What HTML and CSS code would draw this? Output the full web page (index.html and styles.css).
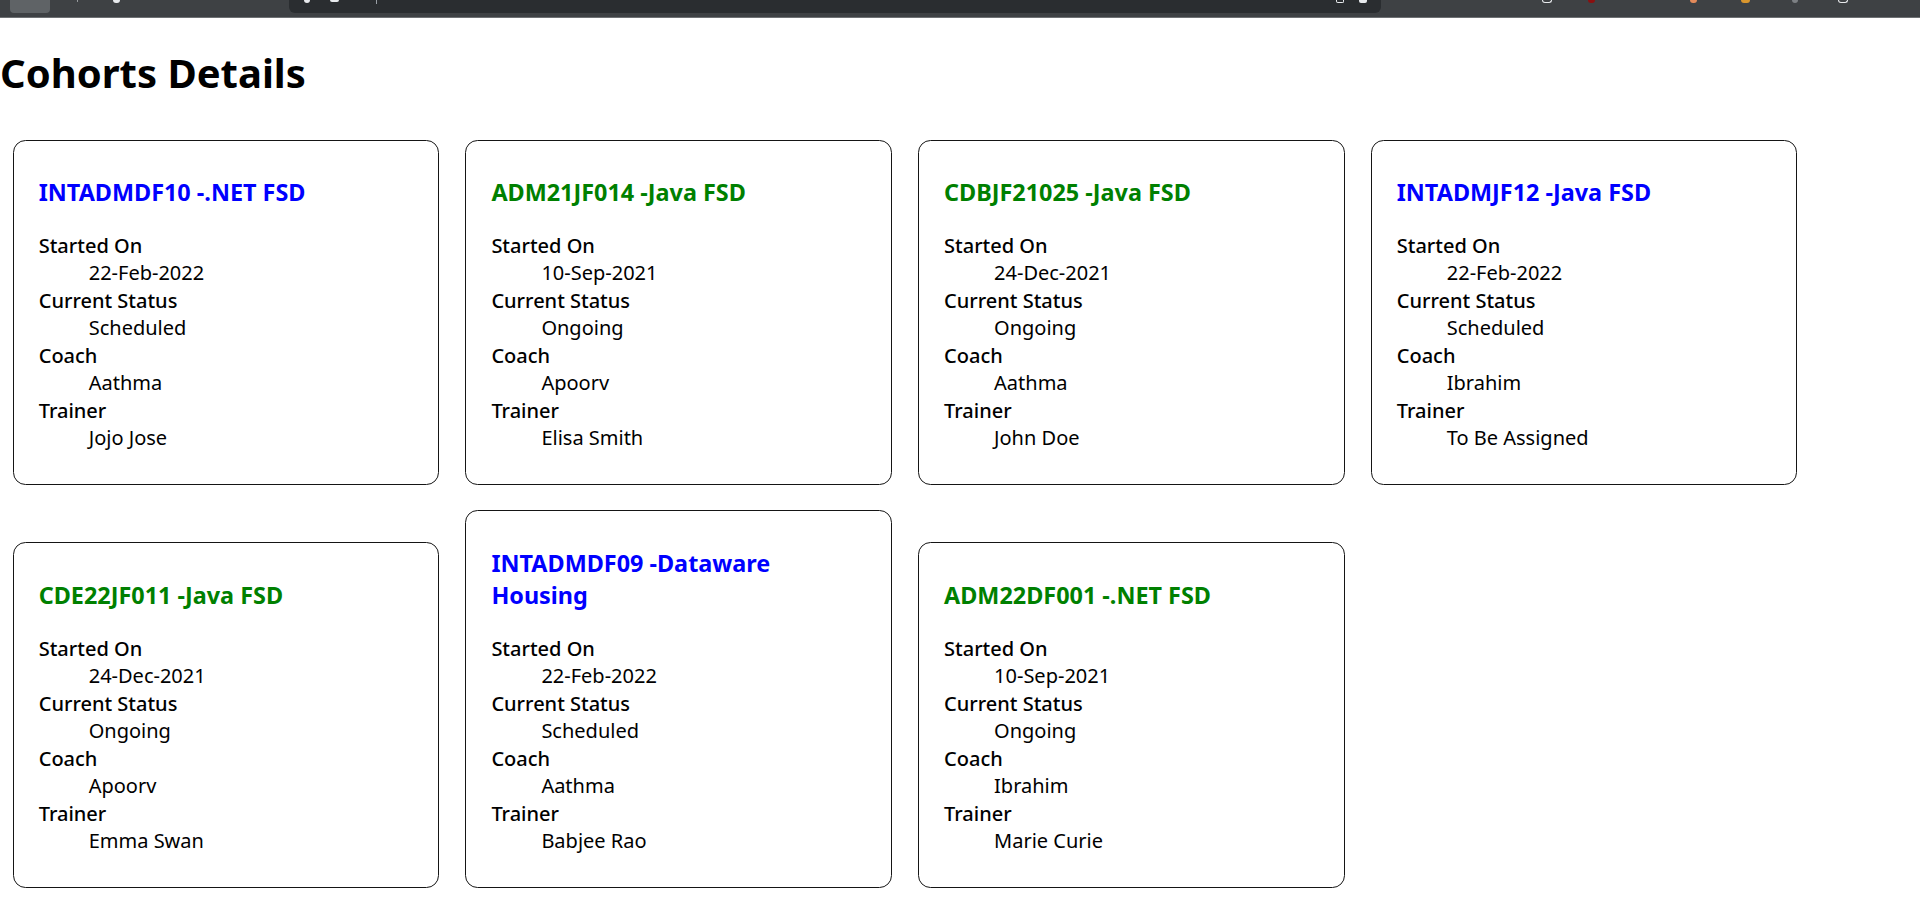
FILE: index.html
```html
<!DOCTYPE html>
<html lang="en">
<head>
<meta charset="utf-8">
<title>Cohorts Details</title>
<link rel="stylesheet" href="styles.css">
</head>
<body>
<div class="chrome">
  <div class="tab-btn"></div>
  <div class="nub nub-a"></div>
  <div class="nub nub-b"></div>
  <div class="urlbox">
    <div class="nub nub-c"></div>
    <div class="nub nub-d"></div>
    <div class="caret"></div>
    <div class="url-spacer"></div>
    <div class="nub nub-e"></div>
    <div class="nub nub-f"></div>
  </div>
  <div class="tools">
    <div class="tool t-white"></div>
    <div class="tool t-red"></div>
    <div class="tool t-orange"></div>
    <div class="tool t-amber"></div>
    <div class="tool t-gray"></div>
    <div class="tool t-white"></div>
  </div>
</div>

<h1 class="page-title">Cohorts Details</h1>

<div class="cards">
  <div class="card">
    <h3 class="card-title scheduled">INTADMDF10 -.NET FSD</h3>
    <dl class="details">
      <dt>Started On</dt><dd>22-Feb-2022</dd>
      <dt>Current Status</dt><dd>Scheduled</dd>
      <dt>Coach</dt><dd>Aathma</dd>
      <dt>Trainer</dt><dd>Jojo Jose</dd>
    </dl>
  </div>
  <div class="card">
    <h3 class="card-title ongoing">ADM21JF014 -Java FSD</h3>
    <dl class="details">
      <dt>Started On</dt><dd>10-Sep-2021</dd>
      <dt>Current Status</dt><dd>Ongoing</dd>
      <dt>Coach</dt><dd>Apoorv</dd>
      <dt>Trainer</dt><dd>Elisa Smith</dd>
    </dl>
  </div>
  <div class="card">
    <h3 class="card-title ongoing">CDBJF21025 -Java FSD</h3>
    <dl class="details">
      <dt>Started On</dt><dd>24-Dec-2021</dd>
      <dt>Current Status</dt><dd>Ongoing</dd>
      <dt>Coach</dt><dd>Aathma</dd>
      <dt>Trainer</dt><dd>John Doe</dd>
    </dl>
  </div>
  <div class="card">
    <h3 class="card-title scheduled">INTADMJF12 -Java FSD</h3>
    <dl class="details">
      <dt>Started On</dt><dd>22-Feb-2022</dd>
      <dt>Current Status</dt><dd>Scheduled</dd>
      <dt>Coach</dt><dd>Ibrahim</dd>
      <dt>Trainer</dt><dd>To Be Assigned</dd>
    </dl>
  </div>
  <div class="card">
    <h3 class="card-title ongoing">CDE22JF011 -Java FSD</h3>
    <dl class="details">
      <dt>Started On</dt><dd>24-Dec-2021</dd>
      <dt>Current Status</dt><dd>Ongoing</dd>
      <dt>Coach</dt><dd>Apoorv</dd>
      <dt>Trainer</dt><dd>Emma Swan</dd>
    </dl>
  </div>
  <div class="card">
    <h3 class="card-title scheduled">INTADMDF09 -Dataware Housing</h3>
    <dl class="details">
      <dt>Started On</dt><dd>22-Feb-2022</dd>
      <dt>Current Status</dt><dd>Scheduled</dd>
      <dt>Coach</dt><dd>Aathma</dd>
      <dt>Trainer</dt><dd>Babjee Rao</dd>
    </dl>
  </div>
  <div class="card">
    <h3 class="card-title ongoing">ADM22DF001 -.NET FSD</h3>
    <dl class="details">
      <dt>Started On</dt><dd>10-Sep-2021</dd>
      <dt>Current Status</dt><dd>Ongoing</dd>
      <dt>Coach</dt><dd>Ibrahim</dd>
      <dt>Trainer</dt><dd>Marie Curie</dd>
    </dl>
  </div>
</div>
</body>
</html>
```

FILE: styles.css
```css
html, body {
  margin: 0;
  padding: 0;
  background: #ffffff;
}

body {
  font-family: "Noto Sans", "Open Sans", "Liberation Sans", sans-serif;
  font-size: 20px;
  color: #000000;
}

/* browser chrome strip at the top */
.chrome {
  height: 17px;
  background: #3e4144;
  border-bottom: 1px solid #6e7174;
  display: flex;
  align-items: flex-start;
  overflow: hidden;
}

.tab-btn {
  width: 40px;
  height: 13px;
  margin-left: 10px;
  background: #5f6366;
  border-radius: 0 0 4px 4px;
}

.nub {
  height: 3px;
  margin-top: 0;
  background: #e8eaed;
  border-radius: 0 0 2px 2px;
}

.nub-a { width: 1px; margin-left: 27px; height: 2px; background: #9a9da0; }
.nub-b { width: 7px; margin-left: 35px; height: 3px; border-radius: 0 0 4px 4px; }

.urlbox {
  margin-left: 169px;
  width: 1092px;
  height: 13px;
  background: #2a2d30;
  border-radius: 0 0 6px 6px;
  display: flex;
  align-items: flex-start;
}

.nub-c { width: 6px; margin-left: 15px; height: 3px; border-radius: 0 0 3px 3px; }
.nub-d { width: 9px; margin-left: 20px; height: 2px; }
.caret { width: 1px; height: 4px; margin-left: 37px; background: #9aa0a6; }
.url-spacer { flex: 1; }
.nub-e { width: 6px; margin-right: 15px; background: transparent; border: 1px solid #e8eaed; border-top: 0; height: 2px; }
.nub-f { width: 8px; height: 3px; margin-right: 14px; }

.tools {
  display: flex;
  align-items: flex-start;
  margin-left: 161px;
}

.tool {
  width: 8px;
  height: 3px;
  border-radius: 0 0 3px 3px;
}

.t-white { background: transparent; border: 1px solid #e8eaed; border-top: 0; height: 2px; width: 8px; }
.t-red { background: #8b1010; margin-left: 36px; width: 7px; }
.t-orange { background: #e38a5b; margin-left: 95px; width: 7px; }
.t-amber { background: #d9962e; margin-left: 44px; width: 9px; }
.t-gray { background: #7d8084; margin-left: 42px; width: 6px; }
.tools .t-gray + .t-white { margin-left: 40px; }

/* page heading */
.page-title {
  font-size: 40px;
  font-weight: 700;
  line-height: normal;
  margin: 26.8px 0;
}

/* cards */
.cards {
  display: flex;
  flex-wrap: wrap;
  align-items: flex-end;
  column-gap: 26.2px;
  row-gap: 25px;
  padding: 13px 0 0 12.7px;
}

.card {
  box-sizing: border-box;
  width: 426.5px;
  border: 1px solid #151515;
  border-radius: 12.5px;
  padding: 12.5px 25px;
}

.card-title {
  font-size: 23.4px;
  font-weight: 700;
  line-height: normal;
  margin: 23.4px 0;
}

.scheduled { color: #0000ff; }
.ongoing { color: #008000; }

.details {
  margin: 20px 0;
  line-height: 27.5px;
}

.details dt {
  font-weight: 500;
}

.details dd {
  margin-left: 50px;
}
```
